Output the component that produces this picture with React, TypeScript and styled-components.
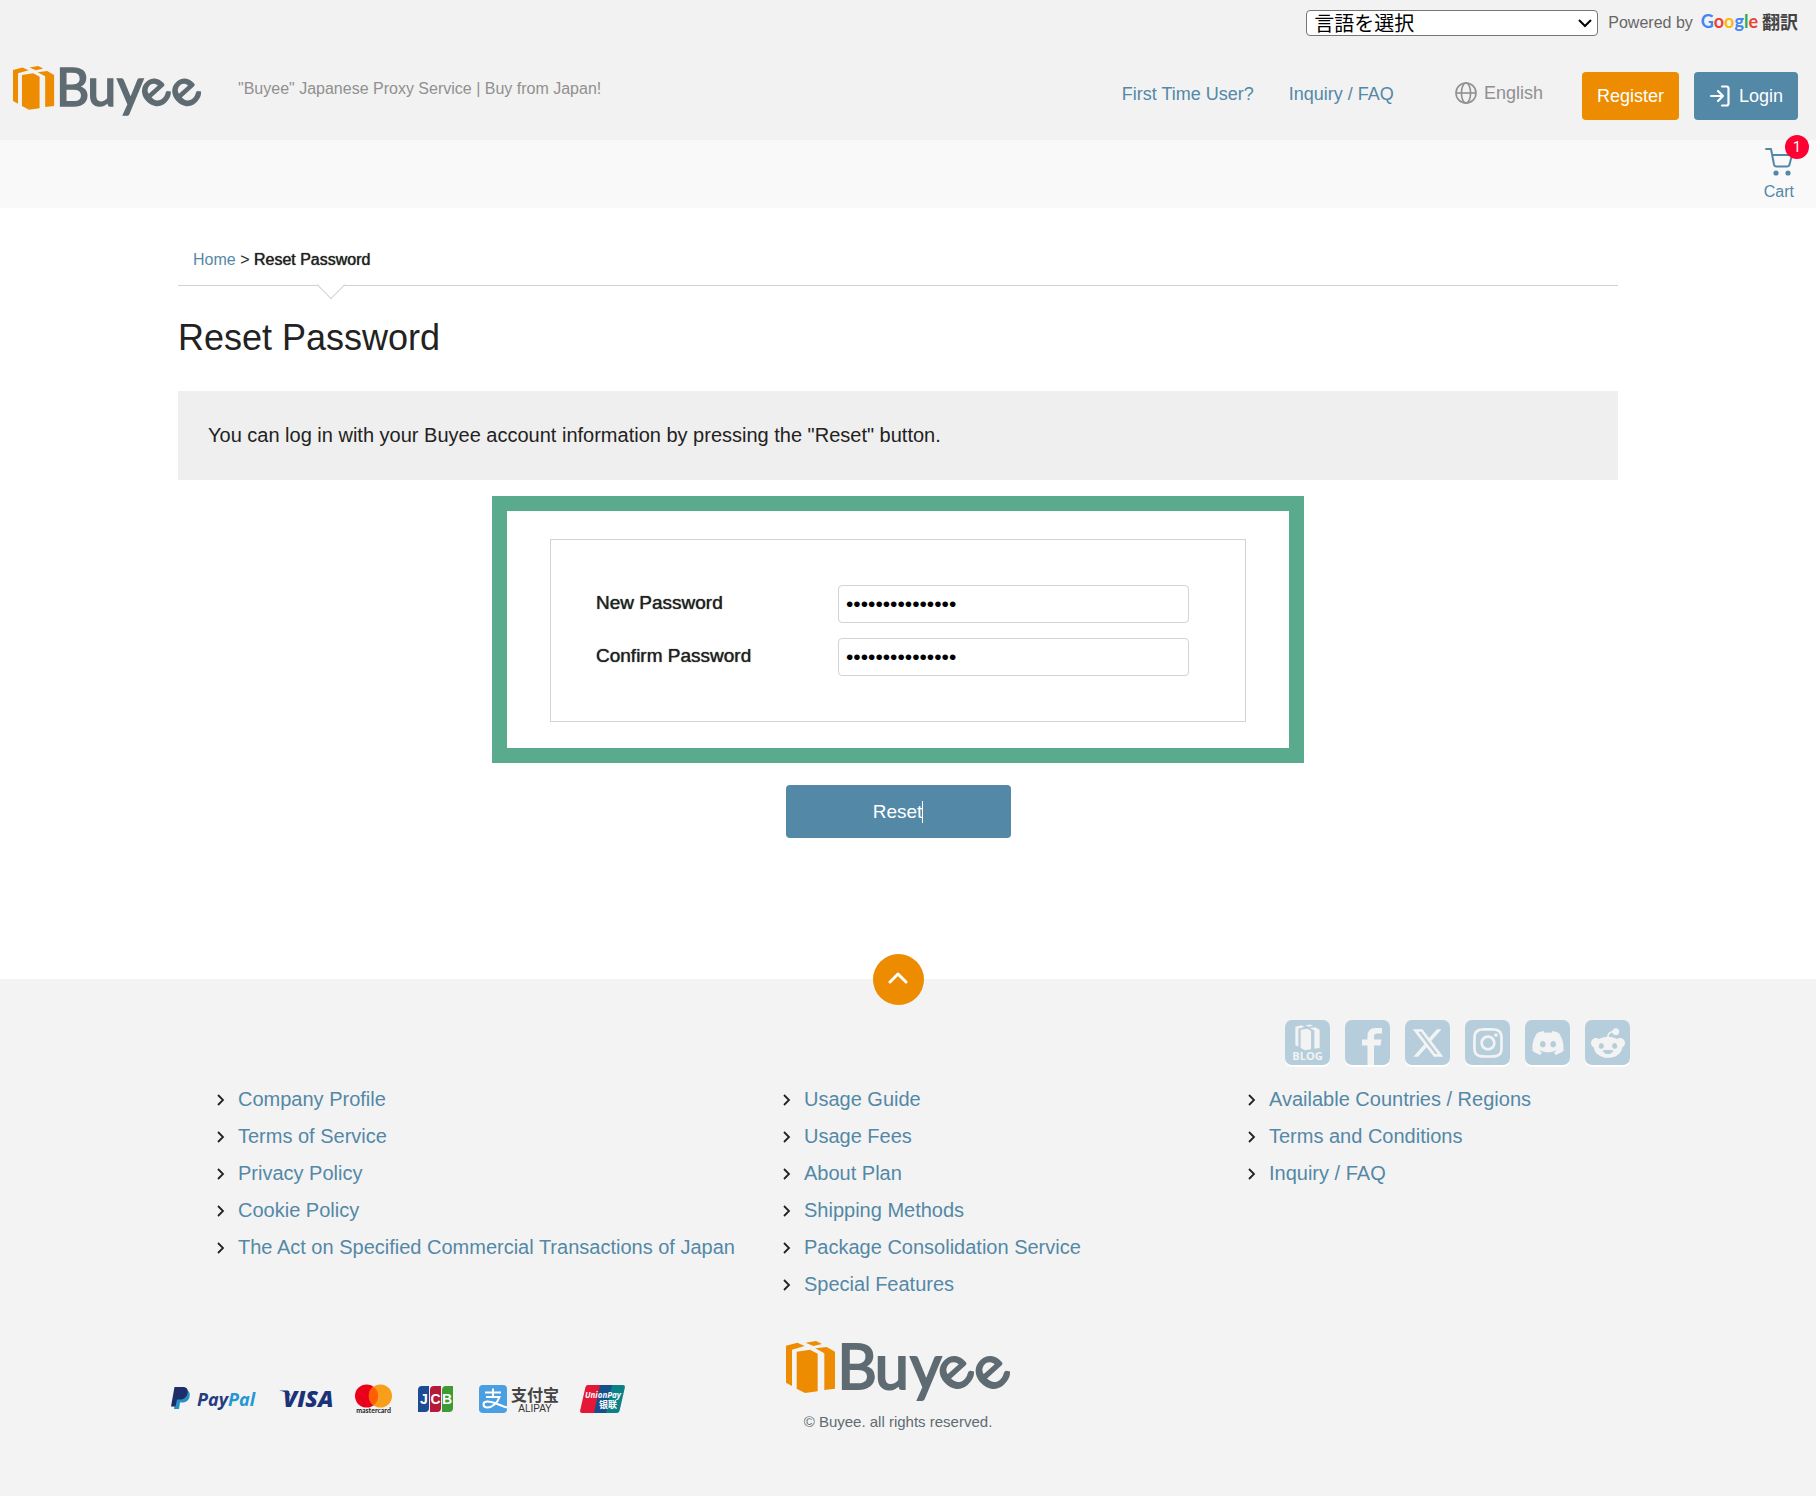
import React from "react";
import styled, { createGlobalStyle } from "styled-components";
import { FaDiscord, FaInstagram, FaRedditAlien, FaXTwitter } from "react-icons/fa6";

const color = {
  link: "#5388a7",
  orange: "#ed8c00",
  text: "#222222",
  muted: "#909090",
  line: "#d3d3d3",
  grey: "#f3f3f3",
  tile: "#b6cddb",
  slate: "#5f6b72",
};

const GlobalStyle = createGlobalStyle`
  *, *::before, *::after { box-sizing: border-box; }
  body {
    margin: 0;
    background: #ffffff;
    color: ${color.text};
    font-family: Arial, "Liberation Sans", "Noto Sans CJK JP", sans-serif;
    font-size: 20px;
    line-height: 24px;
  }
  a { color: ${color.link}; text-decoration: none; }
  button { font-family: inherit; border: 0; cursor: pointer; }
  ul { list-style: none; margin: 0; padding: 0; }
`;

/* ---------- header ---------- */

const Header = styled.header`
  background: #f2f2f2;
  padding: 10px 18px 20px 13px;
`;

const TranslateBar = styled.div`
  display: flex;
  justify-content: flex-end;
  align-items: center;
  gap: 10px;
  height: 26px;
`;

const SelectWrap = styled.div`
  display: grid;
  width: 292px;
  align-items: center;

  > * { grid-area: 1 / 1; }
  svg { justify-self: end; margin-right: 6px; pointer-events: none; }
`;

const LanguageSelect = styled.select`
  appearance: none;
  width: 100%;
  height: 26px;
  padding: 0 7px;
  border: 1px solid #767676;
  border-radius: 4px;
  background: #ffffff;
  color: #000000;
  font-family: "Noto Sans CJK JP", sans-serif;
  font-size: 20px;
  line-height: 24px;
`;

const Powered = styled.span`
  display: flex;
  align-items: center;
  gap: 8px;
  color: #666666;
  font-size: 16px;
`;

const GoogleMark = styled.span`
  display: flex;
  align-self: flex-start;
  gap: 4px;
  font-family: Lato, sans-serif;
  font-size: 18px;
  font-weight: 700;
  line-height: 20px;
`;

const Letter = styled.span<{ $tint: string }>`
  color: ${(p) => p.$tint};
`;

const Kanji = styled.span`
  color: #444444;
  font-family: "Noto Sans CJK JP", sans-serif;
`;

const HeaderRow = styled.div`
  display: flex;
  align-items: center;
  height: 54px;
  margin-top: 30px;
`;

const HomeLink = styled.a`
  display: block;
  align-self: flex-start;
`;

const Tagline = styled.p`
  align-self: flex-start;
  margin: 0 auto 0 37px;
  color: ${color.muted};
  font-size: 16px;
  line-height: 45px;
`;

const Nav = styled.nav`
  display: flex;
  gap: 35px;
  padding-top: 2px;
  font-size: 18px;
`;

const LocaleButton = styled.button`
  display: flex;
  align-items: center;
  gap: 7px;
  margin: 0 39px 0 61px;
  padding: 0;
  background: none;
  color: ${color.muted};
  font-size: 18px;
`;

const Actions = styled.div`
  display: flex;
  align-self: flex-end;
  gap: 15px;
`;

const ActionLink = styled.a<{ $fill: string }>`
  display: flex;
  align-items: center;
  gap: 9px;
  height: 48px;
  padding: 0 15px;
  border-radius: 4px;
  background: ${(p) => p.$fill};
  color: #ffffff;
  font-size: 18px;
`;

const CartBar = styled.div`
  display: flex;
  justify-content: flex-end;
  height: 68px;
  padding: 7px 22px 0 0;
  background: #f9f9f9;
`;

const CartLink = styled.a`
  position: relative;
  display: flex;
  flex-direction: column;
  align-items: center;
  gap: 4px;
  font-size: 16px;
`;

const Badge = styled.span`
  position: absolute;
  top: -12px;
  right: -15px;
  width: 24px;
  height: 24px;
  border-radius: 50%;
  background: #ff0033;
  color: #ffffff;
  font-family: Roboto, sans-serif;
  font-size: 14px;
  text-align: center;
`;

/* ---------- main ---------- */

const Main = styled.main`
  padding: 40px 20px 141px 0;
`;

const Content = styled.div`
  width: min(1440px, 100% - 40px);
  margin: 0 auto;
`;

const Breadcrumb = styled.nav`
  position: relative;
  padding: 0 15px 13px;
  border-bottom: 1px solid ${color.line};
  font-size: 16px;

  &::after {
    content: "";
    position: absolute;
    left: 143px;
    bottom: -10px;
    width: 20px;
    height: 20px;
    border: solid ${color.line};
    border-width: 0 1px 1px 0;
    background: linear-gradient(135deg, transparent 50%, #ffffff 50%);
    transform: rotate(45deg);
  }
`;

const Strong = styled.strong`
  font-weight: 400;
  text-shadow: 0 0 1px currentColor;
`;

const Title = styled.h1`
  margin: 30px 0 32px;
  font-size: 36px;
  font-weight: 400;
  line-height: 43px;
`;

const Notice = styled.p`
  margin: 0;
  padding: 32px 30px 33px;
  background: #efefef;
`;

const Form = styled.form`
  display: flex;
  flex-direction: column;
  align-items: center;
  gap: 22px;
  margin-top: 16px;
`;

const Highlight = styled.div`
  width: min(812px, 100%);
  padding: 28px 43px 26px;
  border: 15px solid #5aab8e;
`;

const Fields = styled.div`
  display: grid;
  gap: 15px;
  padding: 45px 56px 45px 45px;
  border: 1px solid ${color.line};
`;

const Field = styled.div`
  display: grid;
  grid-template-columns: 1fr 351px;
  align-items: center;
`;

const FieldLabel = styled.label`
  line-height: 36px;
  align-self: start;
  font-size: 19px;
  text-shadow: 0 0 1px currentColor;
`;

const PasswordInput = styled.input`
  width: 100%;
  height: 38px;
  padding: 0 7px;
  border: 1px solid ${color.line};
  border-radius: 4px;
  background: #ffffff;
  color: #000000;
  font-family: Arial, "Liberation Sans", sans-serif;
  font-size: 21px;
`;

const ResetButton = styled.button`
  display: flex;
  justify-content: center;
  align-items: center;
  width: 225px;
  height: 53px;
  border-radius: 4px;
  background: ${color.link};
  color: #ffffff;
  font-size: 19px;
`;

const Caret = styled.span`
  width: 1px;
  height: 22px;
  background: #ffffff;
`;

/* ---------- footer ---------- */

const Footer = styled.footer`
  display: flex;
  flex-direction: column;
  align-items: center;
  padding: 0 20px 62px 0;
  background: ${color.grey};
`;

const TopButton = styled.button`
  display: grid;
  place-items: center;
  width: 51px;
  height: 51px;
  margin-top: -25px;
  padding: 0 0 3px;
  border-radius: 50%;
  background: ${color.orange};
`;

const FooterInner = styled.div`
  width: min(1464px, 100% - 40px);
  padding-top: 15px;
`;

const SocialList = styled.ul`
  display: flex;
  justify-content: flex-end;
  gap: 15px;
`;

const SocialLink = styled.a`
  display: grid;
  place-items: center;
  width: 45px;
  height: 45px;
  border-radius: 7px;
  background: ${color.tile};
  box-shadow: 0 2px 0 #ffffff;
  color: ${color.grey};
`;

const LinkColumns = styled.div`
  display: grid;
  grid-template-columns: 566fr 465fr 382fr;
  margin-top: 16px;
  padding-left: 51px;
`;

const LinkRow = styled.li`
  display: flex;
  align-items: center;
  gap: 13px;
  line-height: 37px;
`;

const FooterBottom = styled.div`
  display: grid;
  grid-template-columns: 1fr auto 1fr;
  margin-top: 38px;
`;

const PaymentList = styled.ul`
  display: flex;
  gap: 24px;
  padding: 43px 0 0 5px;
  svg { display: block; }
`;

const Brand = styled.div`
  display: flex;
  flex-direction: column;
  align-items: center;
  gap: 7px;
`;

const Copyright = styled.small`
  color: ${color.slate};
  font-size: 15px;
`;

/* ---------- drawings ---------- */

const LogoSvg = styled.svg`
  display: block;
  overflow: visible;
`;

const Box = () => (
  <>
    <path d="M78 80 112 71 134 81 96 92V201L78 191Z" />
    <path d="M137 71 168 66 186 75 160 81Z" />
    <path d="M110 98 150 92 173 104V217L135 222 110 209Z" />
    <path d="M166 88 200 84 225 98V209L193 213V103Z" />
  </>
);

const Logo = ({ width }: { width: number }) => (
  <LogoSvg width={width} viewBox="78 66 672 186" role="img" aria-label="Buyee">
    <g fill={color.orange}>
      <Box />
    </g>
    <text
      x="232 344 450 582 690"
      y="210 210 210 229 229"
      rotate="0 0 0 -42 -42"
      fontFamily="Lato, sans-serif"
      fontSize="184"
      fill={color.slate}
      stroke={color.slate}
      strokeWidth="6"
    >
      Buyee
    </text>
  </LogoSvg>
);

const Globe = () => (
  <svg width="22" height="22" viewBox="0 0 22 22" fill="none" stroke="currentColor" strokeWidth="1.6">
    <circle cx="11" cy="11" r="10" />
    <ellipse cx="11" cy="11" rx="4.6" ry="10" />
    <path d="M1 11h20" />
  </svg>
);

const LoginIcon = () => (
  <svg width="21" height="22" viewBox="0 0 21 22" fill="none" stroke="currentColor" strokeWidth="2.2" strokeLinecap="round" strokeLinejoin="round">
    <path d="M2 11h12M9 6l5 5-5 5M13 1.500h4.500a2 2 0 0 1 2 2v15a2 2 0 0 1-2 2H13" />
  </svg>
);

const CartIcon = () => (
  <svg width="28" height="29" viewBox="0 0 28 29" fill="none" stroke={color.link} strokeWidth="2" strokeLinecap="round" strokeLinejoin="round">
    <path d="M1 2h5l3 15.500c.3 1.300 1 2 2.500 2h10.500c1.500 0 2.200-.7 2.500-2L27 8H7.500" />
    <circle cx="11" cy="26" r="1.600" fill={color.link} />
    <circle cx="23" cy="26" r="1.600" fill={color.link} />
  </svg>
);

const Chevron = () => (
  <svg width="8" height="12" viewBox="0 0 8 12" fill="none" stroke={color.text} strokeWidth="1.8">
    <path d="M1 1l5 5-5 5" />
  </svg>
);

const BlogMark = () => (
  <svg width="45" height="45" viewBox="0 0 45 45" fill={color.grey}>
    <g transform="translate(-2.500 -6.500) scale(.165)">
      <Box />
    </g>
    <text x="22.500" y="40" fontSize="11" fontWeight="700" fontFamily="Open Sans, sans-serif" textAnchor="middle">
      BLOG
    </text>
  </svg>
);

const FacebookMark = () => (
  <svg width="45" height="45" viewBox="0 0 45 45" fill={color.grey}>
    <path d="M22.500 46V25.500H17V19.500h5.500V16Q22.500 8 30.500 8H37v5.500h-4.500Q29 13.500 29 16.500v3h7.500L35.500 25.500H29V46Z" />
  </svg>
);

const PayPal = () => (
  <svg width="86" height="30" viewBox="0 0 86 30" overflow="visible" role="img" aria-label="PayPal">
    <path d="M6 6h8c4 0 5.500 3 4.500 7-1 4-4 5.500-7.500 5.500H9L8 25H3Z" fill="#2790c3" />
    <path d="M3.500 3h8c4.500 0 6 2.500 5 6.500-1 4-4 6-8 6H6L4.500 22.500H0Z" fill="#1f2d6b" />
    <text x="26" y="22" fontFamily="Open Sans, sans-serif" fontSize="18" fontWeight="700" fontStyle="italic" fill="#253b80">
      Pay<tspan fill="#2497d3">Pal</tspan>
    </text>
  </svg>
);

const Visa = () => (
  <svg width="50" height="30" viewBox="0 0 50 30" overflow="visible" role="img" aria-label="VISA">
    <path d="M-2 6.500h9l3 6Q5 7.500-2 6.500Z" fill="#1a2a6c" />
    <text x="2" y="22.500" fontFamily="Open Sans, sans-serif" fontSize="23" fontWeight="800" fontStyle="italic" fill="#1a3278">
      VISA
    </text>
  </svg>
);

const Mastercard = () => (
  <svg width="39" height="30" viewBox="0 0 39 30" role="img" aria-label="mastercard">
    <circle cx="11.600" cy="12" r="11.600" fill="#eb001b" />
    <circle cx="25.400" cy="12" r="11.600" fill="#f79e1b" />
    <path d="M18.500 2.700a11.600 11.600 0 0 1 0 18.600a11.600 11.600 0 0 1 0-18.600Z" fill="#ff5f00" />
    <text x="18.500" y="29" fontFamily="Lato, sans-serif" fontSize="7" fontWeight="700" textAnchor="middle" fill="#222222">
      mastercard
    </text>
  </svg>
);

const Jcb = () => (
  <svg width="37" height="30" viewBox="0 0 37 30" role="img" aria-label="JCB">
    <path d="M4 2h7v22a4 4 0 0 1-4 4H0V6a4 4 0 0 1 4-4Z" fill="#1b4c94" />
    <path d="M16 2h7v22a4 4 0 0 1-4 4h-7V6a4 4 0 0 1 4-4Z" fill="#b8193a" />
    <path d="M28 2h7v22a4 4 0 0 1-4 4h-7V6a4 4 0 0 1 4-4Z" fill="#3c9b35" />
    <text y="19.500" fontFamily="Liberation Sans, sans-serif" fontSize="14" fontWeight="700" textAnchor="middle" fill="#ffffff">
      <tspan x="6">J</tspan>
      <tspan x="17.500">C</tspan>
      <tspan x="29">B</tspan>
    </text>
  </svg>
);

const Alipay = () => (
  <svg width="77" height="30" viewBox="0 0 77 30" overflow="visible" role="img" aria-label="支付宝 ALIPAY">
    <rect y="1" width="28" height="28" rx="4" fill="#4a9fe3" />
    <path d="M6 8.500h16M14 4.500v8M7 13h13.500C18.500 19 13 23.500 8.500 23.500c-5 0-5.500-5.500-.5-6 5-.4 12 3.500 20 6" fill="none" stroke="#ffffff" strokeWidth="2" />
    <text x="56" y="17" fontFamily="Noto Sans CJK SC, sans-serif" fontSize="16" fontWeight="700" textAnchor="middle" fill="#444444">
      支付宝
    </text>
    <text x="56" y="28" fontFamily="Liberation Sans, sans-serif" fontSize="10" textAnchor="middle" fill="#333333">
      ALIPAY
    </text>
  </svg>
);

const UnionPay = () => (
  <svg width="45" height="30" viewBox="0 0 45 30" role="img" aria-label="UnionPay 银联">
    <path d="M8 1h16l-6 28H2a2 2 0 0 1-2-2L5.500 3A3 3 0 0 1 8 1Z" fill="#e21836" />
    <path d="M20 1h14l-6 28H14Z" fill="#15508c" />
    <path d="M32 1h11a2 2 0 0 1 2 2l-5.500 24a3 3 0 0 1-3 2H26Z" fill="#0b8187" />
    <text x="23" y="14" fontFamily="Open Sans, sans-serif" fontSize="8" fontWeight="700" fontStyle="italic" textAnchor="middle" fill="#ffffff">
      UnionPay
    </text>
    <text x="28" y="24" fontFamily="Noto Sans CJK SC, sans-serif" fontSize="9" fontWeight="700" textAnchor="middle" fill="#ffffff">
      银联
    </text>
  </svg>
);

/* ---------- data ---------- */

const googleLetters: [string, string][] = [
  ["G", "#4285f4"],
  ["o", "#ea4335"],
  ["o", "#fbbc05"],
  ["g", "#4285f4"],
  ["l", "#34a853"],
  ["e", "#ea4335"],
];

const linkColumns = [
  [
    "Company Profile",
    "Terms of Service",
    "Privacy Policy",
    "Cookie Policy",
    "The Act on Specified Commercial Transactions of Japan",
  ],
  [
    "Usage Guide",
    "Usage Fees",
    "About Plan",
    "Shipping Methods",
    "Package Consolidation Service",
    "Special Features",
  ],
  ["Available Countries / Regions", "Terms and Conditions", "Inquiry / FAQ"],
];

const socials = [
  { name: "Blog", icon: <BlogMark /> },
  { name: "Facebook", icon: <FacebookMark /> },
  { name: "X", icon: <FaXTwitter size={34} /> },
  { name: "Instagram", icon: <FaInstagram size={34} /> },
  { name: "Discord", icon: <FaDiscord size={34} /> },
  { name: "Reddit", icon: <FaRedditAlien size={34} /> },
];

const payments = [PayPal, Visa, Mastercard, Jcb, Alipay, UnionPay];

const fields = [
  { id: "new-password", label: "New Password" },
  { id: "confirm-password", label: "Confirm Password" },
];

export default function App() {
  return (
    <>
      <GlobalStyle />
      <Header>
        <TranslateBar>
          <SelectWrap>
            <LanguageSelect aria-label="言語を選択">
              <option>言語を選択</option>
            </LanguageSelect>
            <svg width="14" height="10" viewBox="0 0 14 10" fill="none" stroke="#000000" strokeWidth="2">
              <path d="M1 2l6 6 6-6" />
            </svg>
          </SelectWrap>
          <Powered>
            Powered by
            <GoogleMark>
              <span>
                {googleLetters.map(([char, tint], i) => (
                  <Letter key={i} $tint={tint}>{char}</Letter>
                ))}
              </span>
              <Kanji>翻訳</Kanji>
            </GoogleMark>
          </Powered>
        </TranslateBar>
        <HeaderRow>
          <HomeLink href="#">
            <Logo width={188} />
          </HomeLink>
          <Tagline>"Buyee" Japanese Proxy Service | Buy from Japan!</Tagline>
          <Nav>
            <a href="#">First Time User?</a>
            <a href="#">Inquiry / FAQ</a>
          </Nav>
          <LocaleButton type="button">
            <Globe />
            English
          </LocaleButton>
          <Actions>
            <ActionLink href="#" $fill={color.orange}>Register</ActionLink>
            <ActionLink href="#" $fill={color.link}>
              <LoginIcon />
              Login
            </ActionLink>
          </Actions>
        </HeaderRow>
      </Header>
      <CartBar>
        <CartLink href="#">
          <CartIcon />
          Cart
          <Badge>1</Badge>
        </CartLink>
      </CartBar>

      <Main>
        <Content>
          <Breadcrumb aria-label="Breadcrumb">
            <a href="#">Home</a> &gt; <Strong>Reset Password</Strong>
          </Breadcrumb>
          <Title>Reset Password</Title>
          <Notice>
            You can log in with your Buyee account information by pressing the "Reset" button.
          </Notice>
          <Form onSubmit={(e) => e.preventDefault()}>
            <Highlight>
              <Fields>
                {fields.map((f) => (
                  <Field key={f.id}>
                    <FieldLabel htmlFor={f.id}>{f.label}</FieldLabel>
                    <PasswordInput id={f.id} type="password" defaultValue="passwordsecret1" />
                  </Field>
                ))}
              </Fields>
            </Highlight>
            <ResetButton type="submit">
              Reset
              <Caret />
            </ResetButton>
          </Form>
        </Content>
      </Main>

      <Footer>
        <TopButton type="button" aria-label="Back to top">
          <svg width="20" height="12" viewBox="0 0 20 12" fill="none" stroke="#ffffff" strokeWidth="3" strokeLinecap="round" strokeLinejoin="round">
            <path d="M2 10l8-8 8 8" />
          </svg>
        </TopButton>
        <FooterInner>
          <SocialList>
            {socials.map((s) => (
              <li key={s.name}>
                <SocialLink href="#" aria-label={s.name}>{s.icon}</SocialLink>
              </li>
            ))}
          </SocialList>
          <LinkColumns>
            {linkColumns.map((links) => (
              <ul key={links[0]}>
                {links.map((text) => (
                  <LinkRow key={text}>
                    <Chevron />
                    <a href="#">{text}</a>
                  </LinkRow>
                ))}
              </ul>
            ))}
          </LinkColumns>
          <FooterBottom>
            <PaymentList>
              {payments.map((Mark, i) => (
                <li key={i}>
                  <Mark />
                </li>
              ))}
            </PaymentList>
            <Brand>
              <Logo width={224} />
              <Copyright>© Buyee. all rights reserved.</Copyright>
            </Brand>
          </FooterBottom>
        </FooterInner>
      </Footer>
    </>
  );
}
